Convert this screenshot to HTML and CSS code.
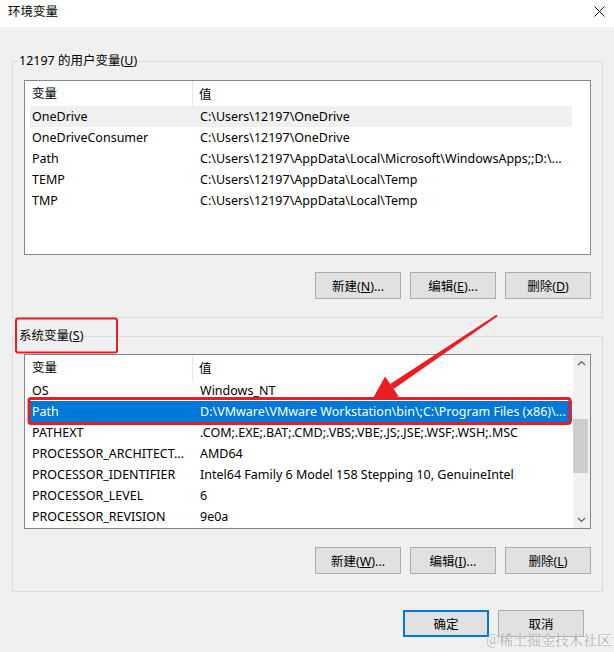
FILE: index.html
```html
<!DOCTYPE html>
<html lang="zh-CN">
<head>
	<meta charset="utf-8">
	<title>环境变量</title>
	<link rel="stylesheet" href="styles.css">
</head>
<body>
	<div class="titlebar">
		<span class="title">环境变量</span>
		<svg class="close" width="11" height="11" viewBox="0 0 11 11"><path d="M0.5 0.5 L10.5 10.5 M10.5 0.5 L0.5 10.5" stroke="#111" stroke-width="1"/></svg>
	</div>

	<fieldset class="group first">
		<legend>12197 的用户变量(<u>U</u>)</legend>
		<div class="list">
			<div class="list-body">
				<div class="list-head">
					<div class="head-name">变量</div>
					<div class="head-value">值</div>
				</div>
				<div class="row hover"><span class="name">OneDrive</span><span class="value">C:\Users\12197\OneDrive</span></div>
				<div class="row"><span class="name">OneDriveConsumer</span><span class="value">C:\Users\12197\OneDrive</span></div>
				<div class="row"><span class="name">Path</span><span class="value">C:\Users\12197\AppData\Local\Microsoft\WindowsApps;;D:\...</span></div>
				<div class="row"><span class="name">TEMP</span><span class="value">C:\Users\12197\AppData\Local\Temp</span></div>
				<div class="row"><span class="name">TMP</span><span class="value">C:\Users\12197\AppData\Local\Temp</span></div>
			</div>
			<div class="scroll-space"></div>
		</div>
		<div class="buttons">
			<button>新建(<u>N</u>)...</button>
			<button>编辑(<u>E</u>)...</button>
			<button>删除(<u>D</u>)</button>
		</div>
	</fieldset>

	<fieldset class="group second">
		<legend>系统变量(<u>S</u>)</legend>
		<div class="list">
			<div class="list-body">
				<div class="list-head">
					<div class="head-name">变量</div>
					<div class="head-value">值</div>
				</div>
				<div class="row"><span class="name">OS</span><span class="value">Windows_NT</span></div>
				<div class="row selected"><span class="name">Path</span><span class="value">D:\VMware\VMware Workstation\bin\;C:\Program Files (x86)\...</span></div>
				<div class="row"><span class="name">PATHEXT</span><span class="value">.COM;.EXE;.BAT;.CMD;.VBS;.VBE;.JS;.JSE;.WSF;.WSH;.MSC</span></div>
				<div class="row"><span class="name">PROCESSOR_ARCHITECT...</span><span class="value">AMD64</span></div>
				<div class="row"><span class="name">PROCESSOR_IDENTIFIER</span><span class="value">Intel64 Family 6 Model 158 Stepping 10, GenuineIntel</span></div>
				<div class="row"><span class="name">PROCESSOR_LEVEL</span><span class="value">6</span></div>
				<div class="row"><span class="name">PROCESSOR_REVISION</span><span class="value">9e0a</span></div>
			</div>
			<div class="scrollbar">
				<svg class="arrow-btn" width="17" height="17" viewBox="0 0 17 17"><path d="M5 10 L8.5 6.5 L12 10" fill="none" stroke="#606060" stroke-width="1.2"/></svg>
				<div class="track"><div class="thumb"></div></div>
				<svg class="arrow-btn" width="17" height="17" viewBox="0 0 17 17"><path d="M5 7 L8.5 10.5 L12 7" fill="none" stroke="#606060" stroke-width="1.2"/></svg>
			</div>
		</div>
		<div class="buttons">
			<button>新建(<u>W</u>)...</button>
			<button>编辑(<u>I</u>)...</button>
			<button>删除(<u>L</u>)</button>
		</div>
	</fieldset>

	<div class="dialog-buttons">
		<button class="default">确定</button>
		<button>取消</button>
	</div>

	<!-- annotations drawn over the screenshot -->
	<svg class="marks" width="614" height="652" viewBox="0 0 614 652">
		<rect x="16" y="318.5" width="101" height="34" rx="2" fill="none" stroke="#ec1c24" stroke-width="2"/>
		<rect x="29" y="398.5" width="541" height="25" rx="2" fill="none" stroke="#ec1c24" stroke-width="3"/>
		<polygon points="497.6,316.3 496.4,314.7 390.2,384 393.6,389" fill="#ec1c24"/>
		<polygon points="372,400 385.1,376.6 398.7,396.4" fill="#ec1c24"/>
	</svg>

	<div class="watermark">@稀土掘金技术社区</div>
</body>
</html>
```

FILE: styles.css
```css
body {
	margin: 0;
	width: 614px;
	height: 652px;
	overflow: hidden;
	position: relative;
	background-color: #f0f0f0;
	font-family: "Noto Sans", "Noto Sans CJK SC", sans-serif;
	font-size: 12.5px;
	color: #000;
}
.titlebar {
	height: 27px;
	background-color: #fff;
	display: flex;
	align-items: flex-start;
	justify-content: space-between;
	padding: 3px 9px 0 8px;
	box-sizing: border-box;
}
.title {
	line-height: 18px;
}
.close {
	margin-top: 3px;
}
.group {
	margin: 0 11px 0 12px;
	border: 1px solid #dcdcdc;
	padding: 10px 11px 18px 11px;
	min-width: 0;
}
.group.first {
	margin-top: 25px;
}
.group.second {
	margin-top: 9px;
	padding-top: 9px;
	padding-bottom: 17px;
}
.group legend {
	margin-left: -6px;
	padding: 0 1px;
	line-height: 18px;
}
.list {
	height: 175px;
	box-sizing: border-box;
	border: 1px solid #828790;
	background-color: #fff;
	display: flex;
}
.list-body {
	flex: 1;
	min-width: 0;
}
.list-head {
	display: flex;
	height: 25px;
	align-items: center;
}
.head-name {
	width: 168px;
	box-sizing: border-box;
	padding-left: 7px;
	border-right: 1px solid #e5e5e5;
	height: 25px;
	line-height: 25px;
}
.head-value {
	padding-left: 6px;
}
.row {
	display: flex;
	align-items: center;
	height: 21px;
	margin-left: 5px;
	white-space: nowrap;
	overflow: hidden;
}
.row .name {
	width: 170px;
	flex: none;
	padding-left: 2px;
	box-sizing: border-box;
}
.row.hover {
	background-color: #f0f0f0;
}
.row.selected {
	background-color: #0078d7;
	color: #fff;
}
.scroll-space {
	width: 18px;
}
.scrollbar {
	width: 17px;
	display: flex;
	flex-direction: column;
	background-color: #f0f0f0;
	border-left: 1px solid #fff;
}
.arrow-btn {
	display: block;
}
.track {
	flex: 1;
	padding-top: 47px;
}
.thumb {
	width: 15px;
	height: 54px;
	background-color: #cdcdcd;
}
.buttons {
	display: flex;
	justify-content: flex-end;
	gap: 9px;
	margin-top: 17px;
}
.second .buttons {
	margin-top: 18px;
}
button {
	width: 86px;
	height: 27px;
	margin: 0;
	padding: 0;
	background-color: #e1e1e1;
	border: 1px solid #adadad;
	font-family: "Noto Sans", "Noto Sans CJK SC", sans-serif;
	font-size: 12.5px;
	color: #000;
}
.dialog-buttons {
	display: flex;
	justify-content: flex-end;
	gap: 9px;
	margin-top: 18px;
	padding-right: 30px;
}
button.default {
	border: 2px solid #0078d7;
}
.marks {
	position: absolute;
	left: 0;
	top: 0;
	pointer-events: none;
}
.watermark {
	position: absolute;
	right: 3px;
	bottom: 3px;
	font-family: "Noto Serif CJK SC", "Noto Sans CJK SC", serif;
	font-size: 14px;
	color: rgba(150, 150, 150, 0.75);
	text-shadow: 0 0 2px #fff;
}
```
